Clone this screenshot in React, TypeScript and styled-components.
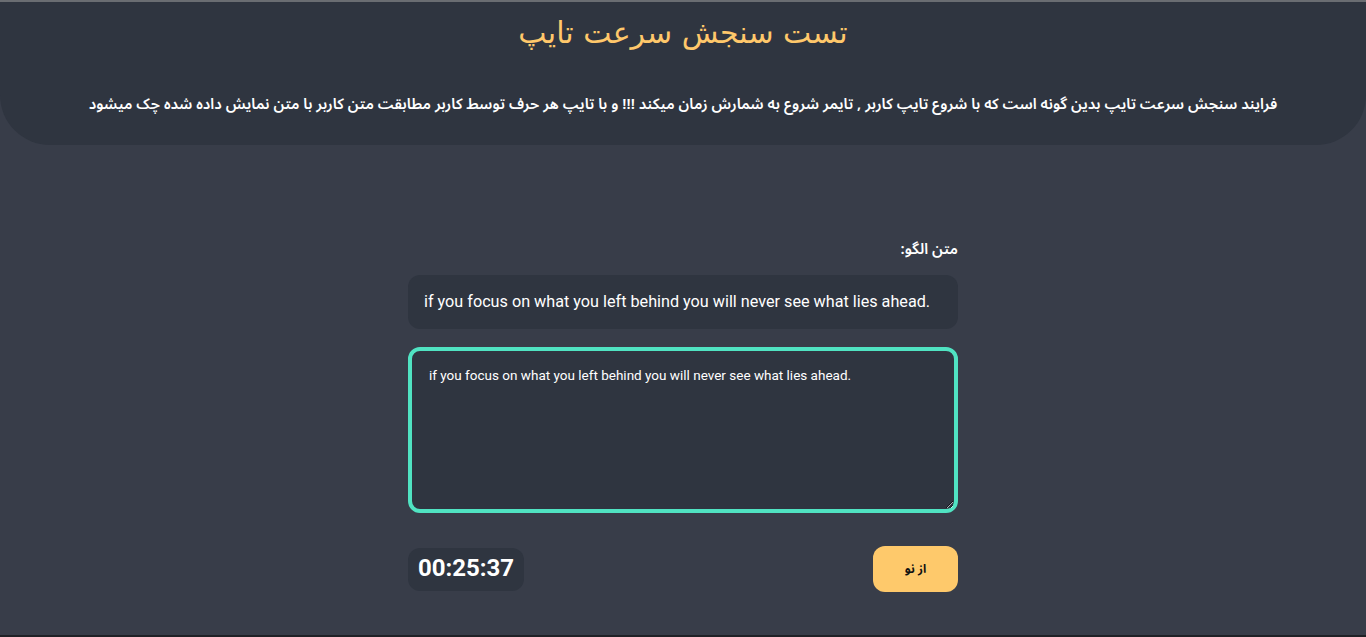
import React, { useState } from "react";
import styled, { createGlobalStyle } from "styled-components";

const Global = createGlobalStyle`
  html, body { margin: 0; padding: 0; background: #383d49; }
  * { box-sizing: border-box; }
`;

const Page = styled.div`
  min-height: 637px;
  height: 637px;
  background: #383d49;
  border-top: 2px solid #6a6d72;
  border-bottom: 2px solid #1f2126;
  display: flex;
  flex-direction: column;
  direction: rtl;
  font-family: "Noto Sans Arabic", "DejaVu Sans", sans-serif;
  overflow: hidden;
`;

const Header = styled.header`
  background: #2f3540;
  height: 143px;
  border-radius: 0 0 50px 50px;
  display: flex;
  flex-direction: column;
  align-items: center;
  padding-top: 12px;
`;

const Title = styled.h1`
  margin: 0;
  color: #ffc86b;
  font-family: "DejaVu Sans", sans-serif;
  font-size: 30px;
  font-weight: 400;
  line-height: 38px;
`;

const Description = styled.p`
  margin: 41px 0 0;
  color: #ffffff;
  font-size: 15px;
  font-weight: 600;
  line-height: 22px;
`;

const Main = styled.main`
  width: 550px;
  margin: 92px auto 0;
  display: flex;
  flex-direction: column;
`;

const Label = styled.label`
  color: #ffffff;
  font-size: 15px;
  font-weight: 600;
  line-height: 22px;
  margin-top: 1px;
  margin-bottom: 15px;
`;

const SampleBox = styled.div`
  direction: ltr;
  background: #2f3540;
  border-radius: 12px;
  height: 54px;
  padding: 0 16px 2px;
  display: flex;
  align-items: center;
  color: #ffffff;
  font-family: Roboto, "Liberation Sans", sans-serif;
  font-size: 16.2px;
`;

const TypeArea = styled.textarea`
  direction: ltr;
  margin-top: 18px;
  height: 166px;
  width: 100%;
  background: #2f3540;
  border: 4px solid #50e3c2;
  border-radius: 12px;
  outline: none;
  color: #ffffff;
  font-family: Roboto, "Liberation Sans", sans-serif;
  font-size: 13.5px;
  line-height: 18px;
  padding: 15px 17px;
  resize: vertical;
`;

const Footer = styled.div`
  margin-top: 33px;
  display: flex;
  justify-content: space-between;
  align-items: center;
`;

const RestartButton = styled.button`
  width: 85px;
  height: 46px;
  border: none;
  border-radius: 12px;
  background: #fec96b;
  color: #111111;
  font-family: "Noto Sans Arabic", "DejaVu Sans", sans-serif;
  font-size: 12px;
  font-weight: 700;
  cursor: pointer;
`;

const Timer = styled.div`
  direction: ltr;
  background: #2f3540;
  border-radius: 12px;
  height: 43px;
  padding: 0 10px 3px;
  display: flex;
  align-items: center;
  color: #ffffff;
  font-family: Roboto, "Liberation Sans", sans-serif;
  font-size: 24px;
  font-weight: 700;
`;

const sample = "if you focus on what you left behind you will never see what lies ahead.";

export default function App() {
  const [value, setValue] = useState(sample);
  return (
    <>
      <Global />
      <Page>
        <Header>
          <Title>تست سنجش سرعت تایپ</Title>
          <Description>
            فرایند سنجش سرعت تایپ بدین گونه است که با شروع تایپ کاربر , تایمر شروع به شمارش زمان میکند !!! و با تایپ هر حرف توسط کاربر مطابقت متن کاربر با متن نمایش داده شده چک میشود
          </Description>
        </Header>
        <Main>
          <Label>متن الگو:</Label>
          <SampleBox>{sample}</SampleBox>
          <TypeArea value={value} onChange={(e) => setValue(e.target.value)} />
          <Footer>
            <RestartButton>از نو</RestartButton>
            <Timer>00:25:37</Timer>
          </Footer>
        </Main>
      </Page>
    </>
  );
}
